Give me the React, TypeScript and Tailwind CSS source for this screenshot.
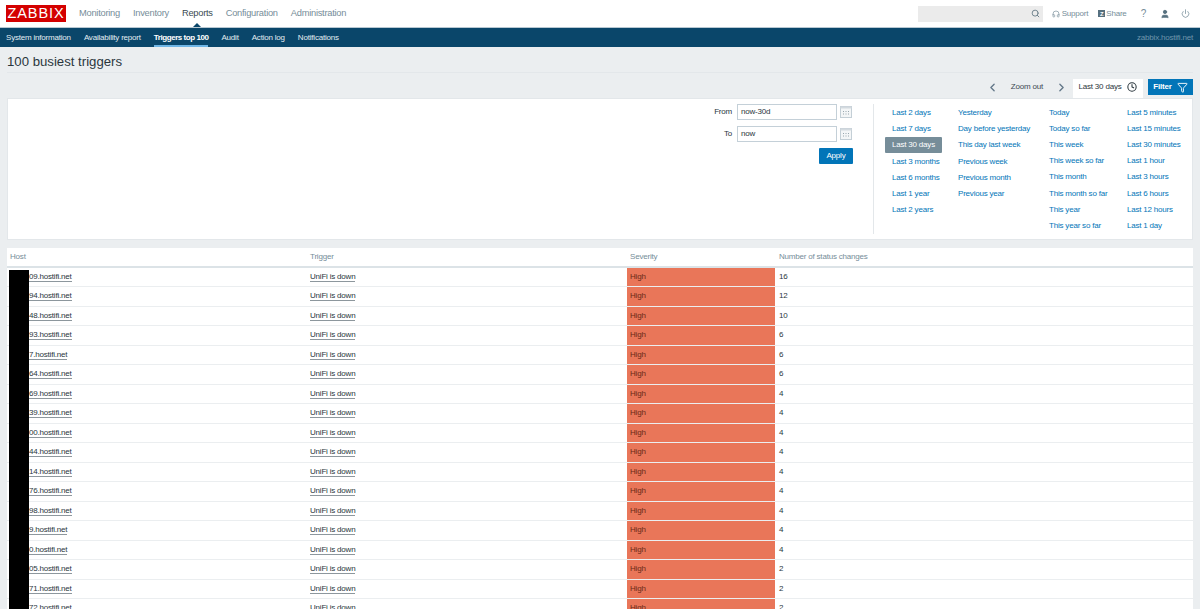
import { Search, Headphones, User, Power, ChevronLeft, ChevronRight, Clock, Filter } from "lucide-react";

const font = { fontFamily: '"Liberation Sans", Arial, sans-serif' };

const mainNav = ["Monitoring", "Inventory", "Reports", "Configuration", "Administration"];
const subNav = ["System information", "Availability report", "Triggers top 100", "Audit", "Action log", "Notifications"];

const rows = [
  ["09", 16], ["94", 12], ["48", 10], ["93", 6], ["7", 6], ["64", 6], ["69", 4], ["39", 4], ["00", 4],
  ["44", 4], ["14", 4], ["76", 4], ["98", 4], ["9", 4], ["0", 4], ["05", 2], ["71", 2], ["72", 2],
];

const rangeColumns = [
  { cls: "w-[66px]", items: ["Last 2 days", "Last 7 days", "Last 30 days", "Last 3 months", "Last 6 months", "Last 1 year", "Last 2 years"] },
  { cls: "w-[91px]", items: ["Yesterday", "Day before yesterday", "This day last week", "Previous week", "Previous month", "Previous year"] },
  { cls: "w-[78px]", items: ["Today", "Today so far", "This week", "This week so far", "This month", "This month so far", "This year", "This year so far"] },
  { cls: "w-[60px]", items: ["Last 5 minutes", "Last 15 minutes", "Last 30 minutes", "Last 1 hour", "Last 3 hours", "Last 6 hours", "Last 12 hours", "Last 1 day"] },
];

function CalendarIcon() {
  return (
    <svg width="12" height="12" viewBox="0 0 12 12" className="ml-[3px]">
      <rect x="0.5" y="0.5" width="11" height="11" fill="#f4f6f7" stroke="#c4cfd6" />
      <rect x="0.5" y="0.5" width="11" height="2" fill="#d3dadf" />
      {[3, 5.5, 8].map((x) => [5, 7.5].map((y) => <rect key={`${x}-${y}`} x={x} y={y} width="1" height="1" fill="#98a6ae" />))}
    </svg>
  );
}

export default function App() {
  return (
    <div style={font} className="relative h-[609px] w-[1200px] overflow-hidden bg-[#ebeef0] text-[8px] tracking-[-0.2px] text-[#2a363d]">
      {/* Top nav */}
      <header className="relative flex h-[28px] items-center border-b border-[#b8c8d2] bg-white pl-[6px] pr-[10px]">
        <div className="flex h-[17px] w-[60px] items-center justify-center bg-[#d40000] text-[14.5px] leading-none tracking-[0.9px] text-white">ZABBIX</div>
        <nav className="ml-[13px] flex gap-[13px] text-[9.3px] tracking-[-0.25px]">
          {mainNav.map((item) => (
            <span key={item} className={item === "Reports" ? "text-[#3a4a52]" : "text-[#768d99]"}>{item}</span>
          ))}
        </nav>
        <div className="ml-auto flex items-center text-[#768d99]">
          <div className="flex h-[16px] w-[125px] items-center justify-end bg-[#ebebeb] pr-[2px]">
            <Search size={9} strokeWidth={2.5} className="mr-[1px] text-[#6b7f8a]" />
          </div>
          <Headphones size={8} className="ml-[9px]" />
          <span className="ml-[2px]">Support</span>
          <span className="ml-[10px] flex h-[7px] w-[7px] items-center justify-center bg-[#56707e] text-[6px] font-bold leading-none text-white">Z</span>
          <span className="ml-[1px]">Share</span>
          <span className="ml-[14px] text-[10px]">?</span>
          <User size={10} fill="#56707e" className="ml-[14px] text-[#56707e]" />
          <Power size={9} className="ml-[11px]" />
        </div>
        {/* Caret under the active menu */}
        <div className="absolute bottom-0 left-[193px] h-0 w-0 border-x-[4px] border-b-[4px] border-x-transparent border-b-[#0a466a]" />
      </header>

      {/* Sub nav */}
      <div className="flex h-[19px] items-center justify-between bg-[#0a466a] pl-[6px] pr-[7px]">
        <nav className="flex h-full gap-[13px]">
          {subNav.map((item) => (
            <span
              key={item}
              className={
                item === "Triggers top 100"
                  ? "flex items-center border-b-2 border-[#6fb5e5] pt-[2px] font-bold tracking-[-0.45px] text-white"
                  : "flex items-center text-[#e3edf2]"
              }
            >
              {item}
            </span>
          ))}
        </nav>
        <span className="text-[#6f95ab]">zabbix.hostifi.net</span>
      </div>

      {/* Title */}
      <div className="mx-[7px] flex h-[26px] items-center border-b border-[#e3e7ea] pt-[4px] text-[13.2px] tracking-normal text-[#2a363d]">100 busiest triggers</div>

      {/* Time controls */}
      <div className="mr-[7px] mt-[6px] flex h-[19px] items-start justify-end">
        <div className="flex h-[16px] items-center text-[#3d4a52]">
          <ChevronLeft size={13} strokeWidth={2.5} className="text-[#64788a]" />
          <span className="mx-[12px]">Zoom out</span>
          <ChevronRight size={13} strokeWidth={2.5} className="mr-[5px] text-[#64788a]" />
        </div>
        <div className="flex h-[19px] w-[70px] items-start justify-center gap-[6px] bg-white pt-[2px]">
          <span className="leading-[12px]">Last 30 days</span>
          <Clock size={10} strokeWidth={2.5} className="mt-[1px]" />
        </div>
        <div className="ml-[5px] flex h-[16px] w-[45px] items-center justify-center gap-[5px] bg-[#0275b8] font-bold text-white">
          Filter <Filter size={11} />
        </div>
      </div>

      {/* Filter panel */}
      <section className="mx-[7px] flex h-[142px] border border-[#e3e7ea] bg-white">
        <div className="ml-auto flex w-[166px] flex-col items-end pr-[21px] pt-[5px]">
          <div className="flex h-[16px] items-center">
            <span className="mr-[5px]">From</span>
            <span className="flex h-[16px] w-[100px] items-center border border-[#c4d0d8] px-[3px]">now-30d</span>
            <CalendarIcon />
          </div>
          <div className="mt-[6px] flex h-[16px] items-center">
            <span className="mr-[5px]">To</span>
            <span className="flex h-[16px] w-[100px] items-center border border-[#c4d0d8] px-[3px]">now</span>
            <CalendarIcon />
          </div>
          <div className="mr-[-1px] mt-[6px] flex h-[16px] w-[34px] items-center justify-center rounded-[1px] bg-[#0275b8] text-white">Apply</div>
        </div>
        <div className="my-[5px] flex w-[319px] border-l border-[#e3e7ea] pl-[18px] pt-[0.5px]">
          {rangeColumns.map((col) => (
            <ul key={col.items[0]} className={`${col.cls} flex flex-col`}>
              {col.items.map((item) => (
                <li key={item} className="flex h-[16.3px] items-center whitespace-nowrap">
                  <span className={item === "Last 30 days" ? "-mx-[7px] rounded-[1px] bg-[#768d99] px-[7px] py-[2px] text-white" : "text-[#0275b8]"}>{item}</span>
                </li>
              ))}
            </ul>
          ))}
        </div>
      </section>

      {/* Results table */}
      <section className="mx-[7px] mt-[8px] bg-white">
        <div className="flex h-[19.5px] items-center border-b-2 border-[#dce3e7] text-[#768d99]">
          <span className="w-[300px] pl-[3px]">Host</span>
          <span className="w-[320px] pl-[3px]">Trigger</span>
          <span className="w-[148px] pl-[3px]">Severity</span>
          <span className="pl-[4px]">Number of status changes</span>
        </div>
        {rows.map(([prefix, count]) => (
          <div key={String(prefix)} className="flex h-[19.5px] items-center border-b border-[#ebeef0]">
            <span className="w-[300px] pl-[22px]">
              <span className="border-b border-[#8d979d]">{prefix}.hostifi.net</span>
            </span>
            <span className="w-[320px] pl-[3px]">
              <span className="border-b border-[#8d979d]">UniFi is down</span>
            </span>
            <span className="flex h-full w-[148px] items-center bg-[#e97659] pl-[3px] text-[#6b2a18]">High</span>
            <span className="pl-[4px]">{count}</span>
          </div>
        ))}
      </section>

      {/* Redaction over the host column */}
      <div className="absolute left-[9px] top-[270px] h-[339px] w-[20px] bg-black" />
    </div>
  );
}
